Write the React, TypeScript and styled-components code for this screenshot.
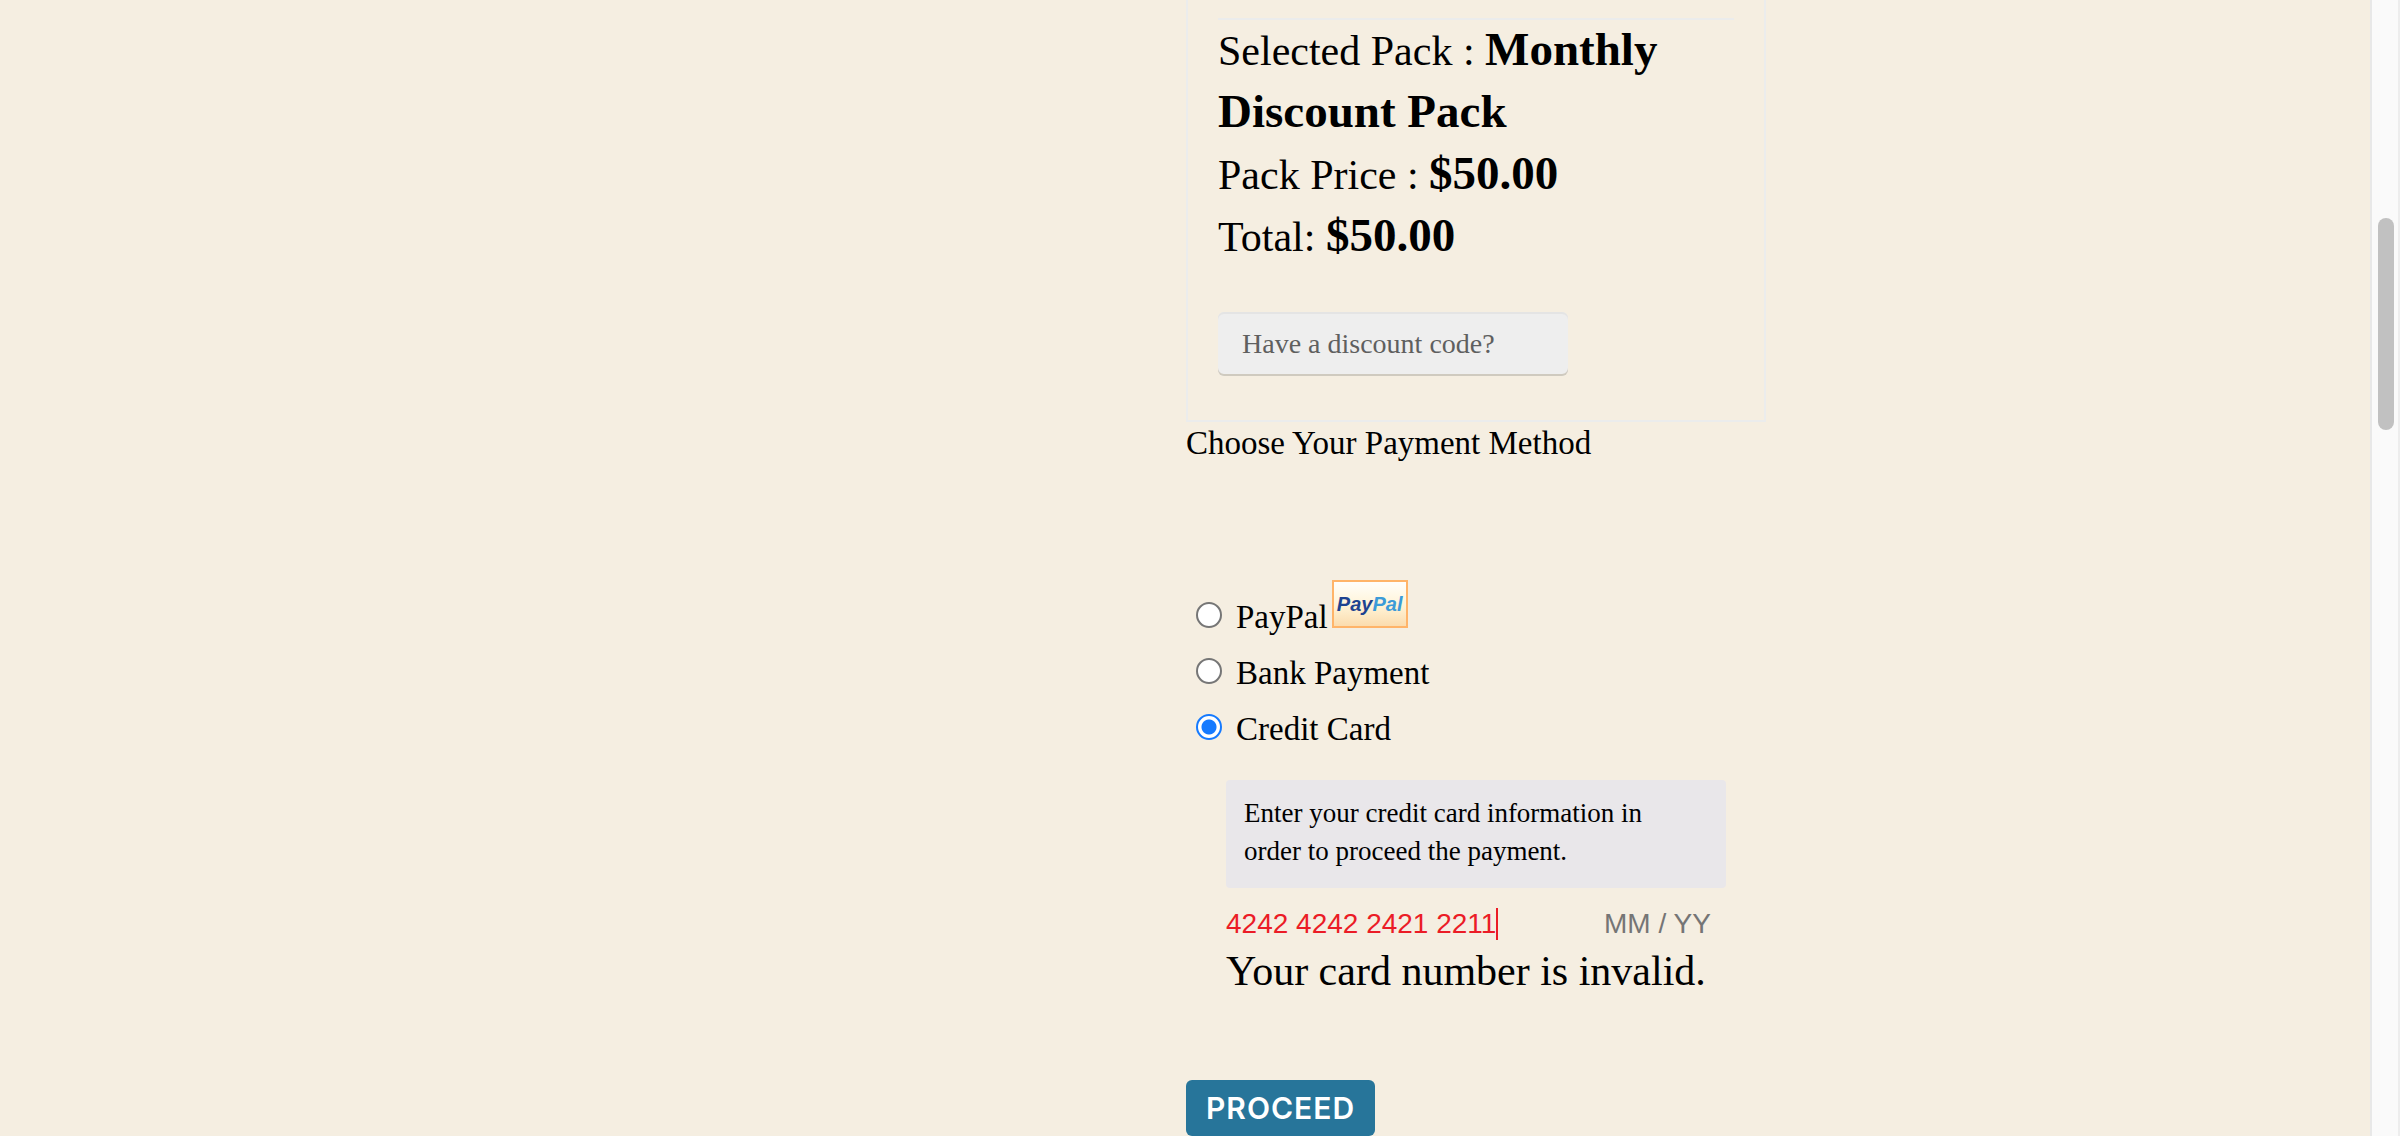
import React, { useState } from "react";
import styled, { createGlobalStyle } from "styled-components";

const serif = `"Adobe Garamond Pro", "Liberation Serif", serif`;
const sans = `"Liberation Sans", Arial, sans-serif`;

const GlobalStyle = createGlobalStyle`
  *, *::before, *::after { box-sizing: border-box; }
  body {
    margin: 0;
    background: #f5eee1;
    color: #000;
    font-family: ${serif};
  }
`;

const Page = styled.div`
  display: flex;
  min-height: 100vh;
`;

const Content = styled.main`
  flex: 1;
  display: grid;
  grid-template-columns: 1fr 1fr;
  box-shadow: inset -2px 0 #e8e8e8;
`;

const Checkout = styled.form`
  grid-column: 2;
  max-width: 580px;
`;

const Summary = styled.section`
  padding: 18px 30px 44px;
  border: 2px solid #ebecec;
  border-top: 0;
`;

const Divider = styled.hr`
  height: 2px;
  margin: 0;
  border: 0;
  background: #ebecec;
`;

const SummaryLine = styled.p`
  margin: 0;
  font-size: 42px;
  line-height: 62px;

  strong {
    font-size: 47px;
    line-height: 1;
  }
`;

const DiscountInput = styled.input`
  display: block;
  width: 350px;
  max-width: 100%;
  height: 64px;
  margin-top: 44px;
  padding: 0 24px;
  border: 0;
  border-radius: 6px;
  background: #eee;
  box-shadow: inset 0 2px #e4e4e4, inset 0 -2px #cfcabf;
  font-family: ${serif};
  font-size: 28px;

  &::placeholder { color: #5f5f5f; opacity: 1; }
`;

const Methods = styled.fieldset`
  min-width: 0;
  margin: 0;
  padding: 0;
  border: 0;
`;

const MethodsTitle = styled.legend`
  padding: 0;
  font-size: 33px;
  line-height: 42px;
`;

const MethodList = styled.div`
  margin-top: 125px;
  padding-left: 10px;
`;

const Method = styled.label`
  display: flex;
  align-items: baseline;
  font-size: 33px;
  line-height: 56px;
`;

const Radio = styled.input`
  appearance: none;
  flex: none;
  width: 26px;
  height: 26px;
  margin: 0 14px 0 0;
  border: 2px solid #767676;
  border-radius: 50%;
  background: #fff;

  &:checked {
    border-color: #157aff;
    background: radial-gradient(circle, #157aff 0 7px, #fff 8px);
  }
`;

const PayPalBadge = styled.span`
  display: flex;
  align-items: center;
  justify-content: center;
  align-self: flex-start;
  width: 76px;
  height: 48px;
  margin: -9px 0 0 4px;
  border: 2px solid #ffb469;
  background: linear-gradient(#fffefb, #fff3d6 55%, #fbdcae);
  color: #1e4390;
  font: italic bold 20px/1 ${sans};

  em { color: #3b9bd8; }
`;

const CardPanel = styled.div`
  padding-left: 40px;
  padding-right: 40px;
`;

const Notice = styled.p`
  margin: 23px 0 20px;
  padding: 14px 24px 18px 18px;
  border-radius: 4px;
  background: #e9e7ea;
  font-size: 27px;
  line-height: 38px;
`;

const CardRow = styled.div`
  display: flex;
  height: 32px;
`;

const CardInput = styled.input<{ $invalid?: boolean }>`
  padding: 0;
  border: 0;
  outline: 0;
  background: transparent;
  color: ${(p) => (p.$invalid ? "#eb1c26" : "#000")};
  font-family: ${sans};
  font-size: 28px;
  line-height: 32px;

  &::placeholder { color: #757575; opacity: 1; }
`;

const NumberInput = styled(CardInput)`
  field-sizing: content;
`;

const ExpiryInput = styled(CardInput)`
  width: 122px;
  margin-left: auto;
`;

const Caret = styled.span`
  width: 2px;
  background: #eb1c26;
`;

const CardError = styled.p`
  margin: 0;
  font-size: 42px;
  line-height: 62px;
`;

const ProceedButton = styled.button`
  display: block;
  height: 56px;
  margin-top: 78px;
  padding: 0 20px;
  border: 0;
  border-radius: 6px;
  background: #27759a;
  color: #fff;
  font-family: Inter, sans-serif;
  font-size: 30px;
  font-weight: 600;
  letter-spacing: 1px;
`;

const ScrollTrack = styled.div`
  width: 28px;
  padding: 218px 4px 0 6px;
  border-right: 2px solid #ededed;
  background: #fafafa;
`;

const ScrollThumb = styled.div`
  height: 212px;
  border-radius: 8px;
  background: #c1c1c1;
`;

export default function App() {
  const [method, setMethod] = useState("card");
  const [number, setNumber] = useState("4242 4242 2421 2211");

  const radio = (value: string) => (
    <Radio
      type="radio"
      name="method"
      value={value}
      checked={method === value}
      onChange={() => setMethod(value)}
    />
  );

  return (
    <Page>
      <GlobalStyle />
      <Content>
        <Checkout onSubmit={(e) => e.preventDefault()}>
          <Summary>
            <Divider />
            <SummaryLine>
              Selected Pack : <strong>Monthly</strong> <strong>Discount Pack</strong>
            </SummaryLine>
            <SummaryLine>
              Pack Price : <strong>$50.00</strong>
            </SummaryLine>
            <SummaryLine>
              Total: <strong>$50.00</strong>
            </SummaryLine>
            <DiscountInput
              type="text"
              aria-label="Discount code"
              placeholder="Have a discount code?"
            />
          </Summary>

          <Methods>
            <MethodsTitle>Choose Your Payment Method</MethodsTitle>
            <MethodList>
              <Method>
                {radio("paypal")}
                PayPal
                <PayPalBadge>
                  <span>Pay<em>Pal</em></span>
                </PayPalBadge>
              </Method>
              <Method>
                {radio("bank")}
                Bank Payment
              </Method>
              <Method>
                {radio("card")}
                Credit Card
              </Method>
            </MethodList>
          </Methods>

          <CardPanel>
            <Notice>
              Enter your credit card information in order to proceed the payment.
            </Notice>
            <CardRow>
              <NumberInput
                $invalid
                type="text"
                aria-label="Card number"
                aria-invalid="true"
                value={number}
                onChange={(e) => setNumber(e.target.value)}
              />
              <Caret />
              <ExpiryInput type="text" aria-label="Expiry date" placeholder="MM / YY" />
            </CardRow>
            <CardError role="alert">Your card number is invalid.</CardError>
          </CardPanel>

          <ProceedButton type="submit">PROCEED</ProceedButton>
        </Checkout>
      </Content>
      <ScrollTrack aria-hidden="true">
        <ScrollThumb />
      </ScrollTrack>
    </Page>
  );
}
